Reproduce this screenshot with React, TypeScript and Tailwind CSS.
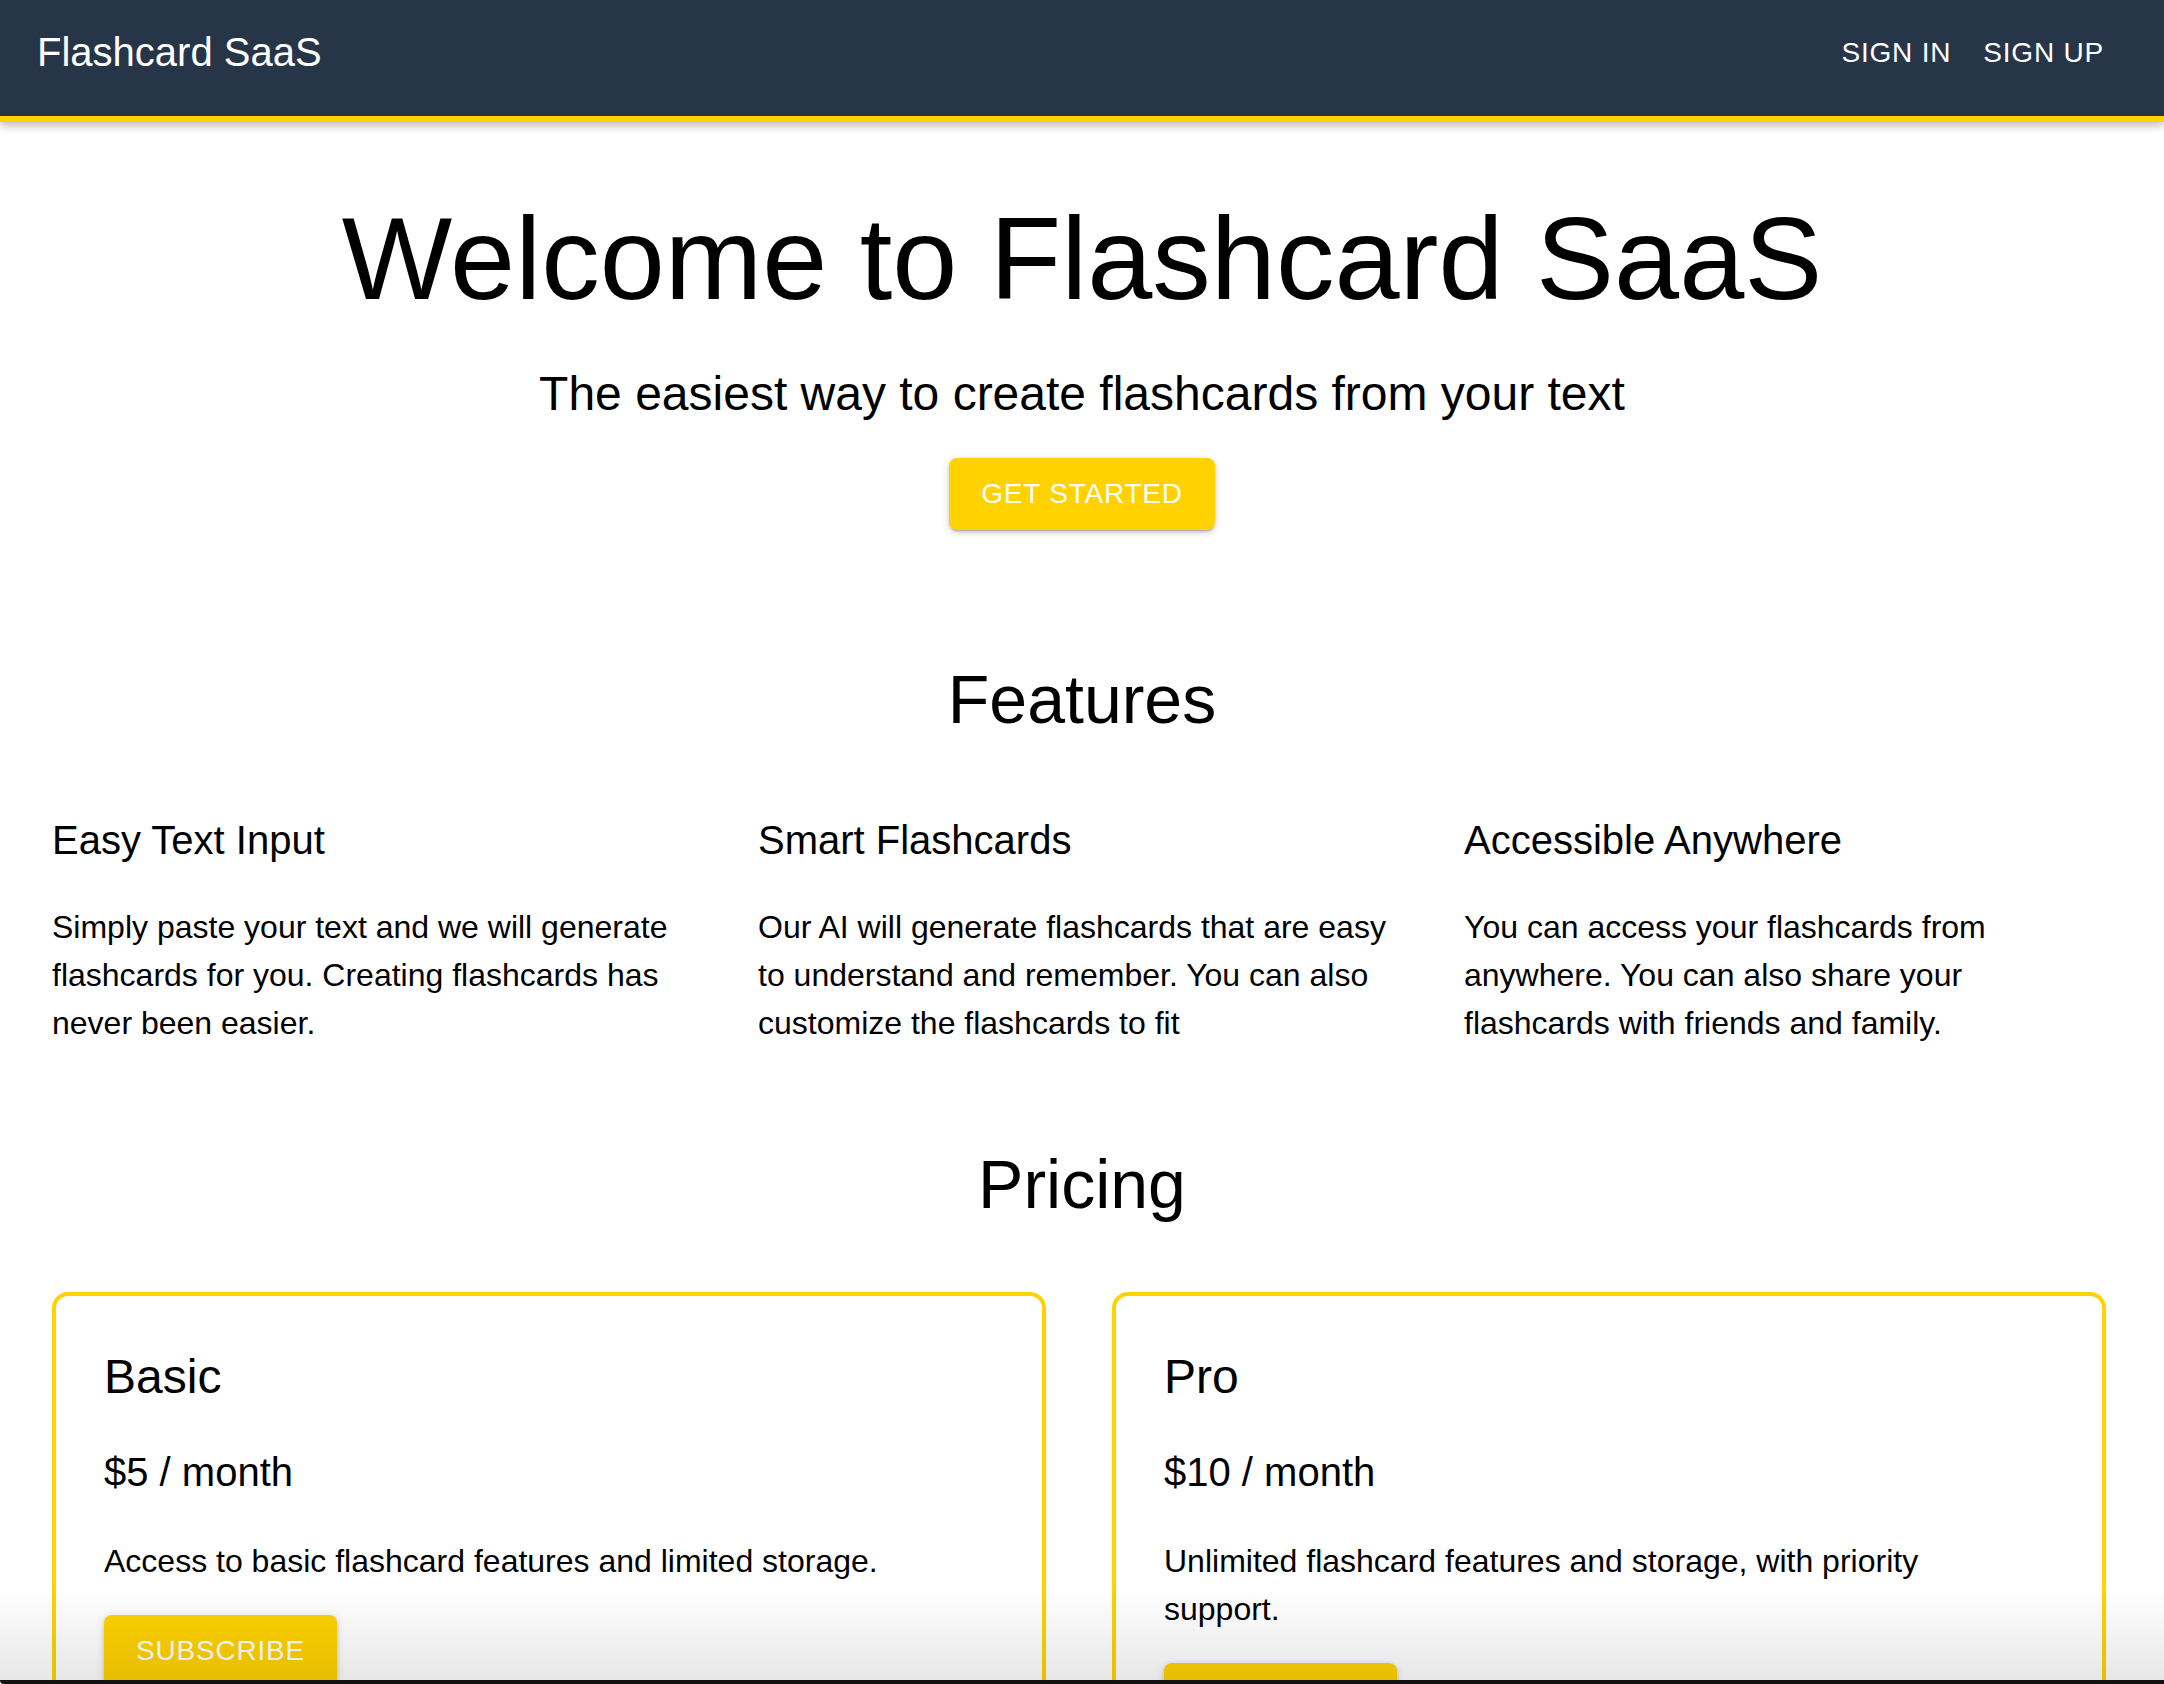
import React from "react";

interface Feature {
  title: string;
  text: string;
}

interface Plan {
  name: string;
  price: string;
  text: string;
}

const features: Feature[] = [
  {
    title: "Easy Text Input",
    text: "Simply paste your text and we will generate flashcards for you. Creating flashcards has never been easier.",
  },
  {
    title: "Smart Flashcards",
    text: "Our AI will generate flashcards that are easy to understand and remember. You can also customize the flashcards to fit",
  },
  {
    title: "Accessible Anywhere",
    text: "You can access your flashcards from anywhere. You can also share your flashcards with friends and family.",
  },
];

const plans: Plan[] = [
  { name: "Basic", price: "$5 / month", text: "Access to basic flashcard features and limited storage." },
  { name: "Pro", price: "$10 / month", text: "Unlimited flashcard features and storage, with priority support." },
];

const YellowButton = ({ label }: { label: string }) => (
  <button className="h-[72px] px-[32px] rounded-[8px] bg-[#FFD200] text-white text-[28px] tracking-[0.8px] uppercase shadow-[0_3px_2px_-2px_rgba(0,0,0,0.2),0_2px_4px_0_rgba(0,0,0,0.14),0_2px_10px_0_rgba(0,0,0,0.12)]">
    {label}
  </button>
);

const App = () => {
  return (
    <div className="relative h-[1684px] overflow-hidden bg-white text-black font-['Liberation_Sans',Arial,sans-serif]">
      <header className="relative z-10 h-[122px] bg-[#263548] border-b-[6px] border-[#FFD200] shadow-[0_4px_8px_rgba(0,0,0,0.25)]">
        <div className="h-[104px] flex items-center pl-[37px] pr-[44px]">
          <h6 className="text-[40px] leading-[64px] text-white flex-1">Flashcard SaaS</h6>
          <div className="flex">
            <button className="px-[16px] py-[12px] text-[28px] leading-[49px] tracking-[0.8px] text-white uppercase">
              Sign In
            </button>
            <button className="px-[16px] py-[12px] text-[28px] leading-[49px] tracking-[0.8px] text-white uppercase">
              Sign Up
            </button>
          </div>
        </div>
      </header>

      <main>
        <section className="mt-[67px] text-center">
          <h1 className="text-[117px] leading-[140px] mb-[33px]">Welcome to Flashcard SaaS</h1>
          <h5 className="text-[48px] leading-[64px] mb-[32px]">The easiest way to create flashcards from your text</h5>
          <YellowButton label="Get Started" />
        </section>

        <section className="mt-[127px]">
          <h4 className="text-[68px] leading-[84px] text-center">Features</h4>
          <div className="mt-[67px] px-[52px] grid grid-cols-[repeat(3,640px)] gap-x-[66px]">
            {features.map((f) => (
              <div key={f.title}>
                <h6 className="text-[40px] leading-[64px] mb-[31px]">{f.title}</h6>
                <p className="text-[32px] leading-[48px]">{f.text}</p>
              </div>
            ))}
          </div>
        </section>

        <section className="mt-[95px]">
          <h4 className="text-[68px] leading-[84px] text-center">Pricing</h4>
          <div className="mt-[66px] px-[52px] grid grid-cols-[994px_994px] gap-x-[66px]">
            {plans.map((p) => (
              <div key={p.name} className="border-4 border-[#FFD200] rounded-[16px] px-[48px] pt-[49px] pb-[48px]">
                <h5 className="text-[48px] leading-[64px] mb-[31px]">{p.name}</h5>
                <h6 className="text-[40px] leading-[64px] mb-[33px]">{p.price}</h6>
                <p className="max-w-[840px] text-[32px] leading-[48px] mb-[30px]">{p.text}</p>
                <YellowButton label="Subscribe" />
              </div>
            ))}
          </div>
        </section>
      </main>

      {/* window edge shading at the bottom of the capture */}
      <div className="pointer-events-none absolute inset-x-0 bottom-0 h-[96px] bg-gradient-to-b from-transparent to-black/10" />
      <div className="pointer-events-none absolute inset-x-0 bottom-0 h-[4px] bg-[#111] rounded-bl-[8px]" />
    </div>
  );
};

export default App;
